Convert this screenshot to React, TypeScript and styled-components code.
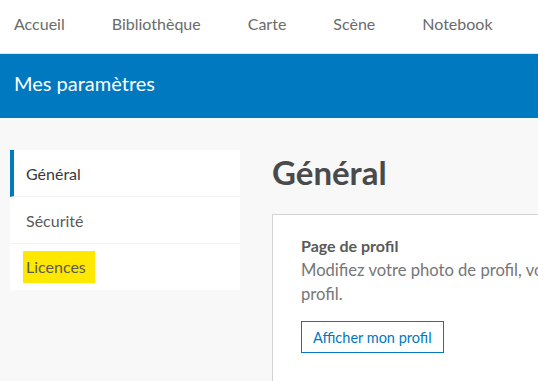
import styled, { createGlobalStyle } from "styled-components";

const GlobalStyle = createGlobalStyle`
  html, body {
    margin: 0;
    padding: 0;
    background: #f8f8f8;
    overflow: hidden;
    font-family: Lato, "Noto Sans", sans-serif;
  }
`;

const SPage = styled.div`
  width: 538px;
  height: 381px;
  overflow: hidden;
  background: #f8f8f8;
`;

const STopNav = styled.nav`
  display: flex;
  align-items: center;
  gap: 47px;
  height: 47px;
  padding: 0 0 6px 14px;
  background: #ffffff;
  border-bottom: 1px solid #dbe6ee;
  white-space: nowrap;
`;

const SNavLink = styled.span`
  font-size: 16px;
  color: #6b6b6b;
`;

const SBanner = styled.header`
  display: flex;
  align-items: center;
  height: 58px;
  padding: 0 0 6px 14px;
  background: #0079c1;
  color: #ffffff;
  font-size: 20px;
`;

const SBody = styled.div`
  display: flex;
  gap: 32px;
  padding: 32px 0 0 10px;
`;

const SSideMenu = styled.ul`
  flex: 0 0 230px;
  height: 140px;
  margin: 0;
  padding: 0;
  list-style: none;
  background: #ffffff;
`;

const SMenuItem = styled.li<{ $active?: boolean }>`
  display: flex;
  align-items: center;
  height: 46px;
  padding-left: ${({ $active }) => ($active ? "12px" : "16px")};
  border-left: ${({ $active }) => ($active ? "4px solid #0079c1" : "none")};
  border-bottom: 1px solid #f1f1f1;
  font-size: 16px;
  color: ${({ $active }) => ($active ? "#3a3a3a" : "#5a5a5a")};
  &:last-child {
    border-bottom: none;
  }
`;

const SHighlight = styled.span`
  margin-left: -3px;
  padding: 6px 9px 7px 3px;
  background: #ffe800;
`;

const SMain = styled.main`
  flex: 0 0 auto;
  display: flex;
  flex-direction: column;
`;

const STitle = styled.h1`
  margin: 0;
  height: 64px;
  font-size: 33px;
  font-weight: 700;
  line-height: 44px;
  color: #4a4a4a;
`;

const SCard = styled.section`
  width: 420px;
  height: 200px;
  padding: 20px 28px;
  background: #ffffff;
  border: 1px solid #d4d4d4;
`;

const SCardTitle = styled.h2`
  margin: 0;
  font-size: 16px;
  font-weight: 700;
  line-height: 22px;
  color: #595959;
`;

const SCardText = styled.p`
  margin: 1px 0 15px;
  font-size: 16.6px;
  line-height: 24px;
  color: #767676;
  white-space: pre;
`;

const SButton = styled.button`
  height: 32px;
  padding: 0 11px;
  background: #ffffff;
  border: 1px solid #0079c1;
  color: #0079c1;
  font-family: inherit;
  font-size: 14.5px;
`;

export default function App() {
  const links = ["Accueil", "Bibliothèque", "Carte", "Scène", "Notebook"];

  return (
    <SPage>
      <GlobalStyle />
      <STopNav>
        {links.map(link => (
          <SNavLink key={link}>{link}</SNavLink>
        ))}
      </STopNav>
      <SBanner>Mes paramètres</SBanner>
      <SBody>
        <SSideMenu>
          <SMenuItem $active>Général</SMenuItem>
          <SMenuItem>Sécurité</SMenuItem>
          <SMenuItem>
            <SHighlight>Licences</SHighlight>
          </SMenuItem>
        </SSideMenu>
        <SMain>
          <STitle>Général</STitle>
          <SCard>
            <SCardTitle>Page de profil</SCardTitle>
            <SCardText>
              {"Modifiez votre photo de profil, votre nom et la description de votre\nprofil."}
            </SCardText>
            <SButton>Afficher mon profil</SButton>
          </SCard>
        </SMain>
      </SBody>
    </SPage>
  );
}
